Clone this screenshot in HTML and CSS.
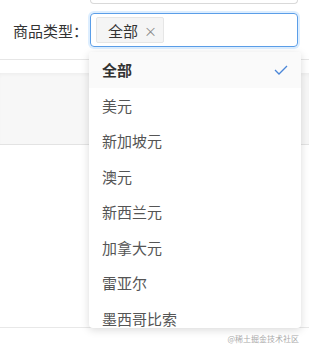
FILE: index.html
```html
<!DOCTYPE html>
<html lang="zh">
<head>
  <meta charset="UTF-8" />
  <title>商品类型</title>
  <link rel="stylesheet" href="styles.css">
</head>
<body>
  <div class="top-input"></div>

  <div class="form-row">
    <label class="form-label">商品类型：</label>
    <div class="select">
      <span class="tag">全部 <span class="tag-close">×</span></span>
    </div>
  </div>

  <div class="divider"></div>

  <div class="table">
    <div class="table-head"></div>
    <div class="table-body"></div>
  </div>

  <ul class="dropdown">
    <li class="option selected">全部 <span class="check">
      <svg width="14" height="10" viewBox="0 0 14 10"><path d="M1 5 L5 9 L13 1" fill="none" stroke="#4a86d8" stroke-width="1.3"/></svg>
    </span></li>
    <li class="option">美元</li>
    <li class="option">新加坡元</li>
    <li class="option">澳元</li>
    <li class="option">新西兰元</li>
    <li class="option">加拿大元</li>
    <li class="option">雷亚尔</li>
    <li class="option">墨西哥比索</li>
  </ul>

  <div class="watermark">@稀土掘金技术社区</div>
</body>
</html>
```

FILE: styles.css
```css
* {
  box-sizing: border-box;
}
body {
  margin: 0;
  background-color: white;
  color: #333;
  font-family: "Noto Sans CJK SC", "Noto Sans", sans-serif;
  position: relative;
  height: 352px;
  overflow: hidden;
}
.top-input {
  margin-left: 90px;
  width: 208px;
  height: 4px;
  border: 1px solid #d9d9d9;
  border-top: none;
  border-radius: 0 0 4px 4px;
}
.form-row {
  display: flex;
  align-items: center;
  margin-top: 9px;
  padding-left: 13px;
}
.form-label {
  width: 77px;
  font-size: 15px;
  color: #333;
}
.select {
  width: 208px;
  height: 34px;
  border: 1px solid #5b9ee8;
  border-radius: 4px;
  box-shadow: 0 0 0 2px rgba(24, 144, 255, 0.15);
  display: flex;
  align-items: center;
  padding-left: 5px;
}
.tag {
  display: flex;
  align-items: center;
  height: 26px;
  padding: 0 6px 0 11px;
  background-color: #f5f5f5;
  border: 1px solid #e6e6e6;
  border-radius: 2px;
  font-size: 15px;
  color: #333;
}
.tag-close {
  margin-left: 6px;
  font-size: 13px;
  color: #888;
}
.divider {
  margin-top: 12px;
  border-top: 1px solid #e6e6e6;
}
.table {
  margin-top: 13px;
}
.table-head {
  height: 72px;
  background-color: #f7f7f7;
  border-bottom: 1px solid #e3e3e3;
  box-shadow: inset 0 3px 4px -2px rgba(0, 0, 0, 0.05);
}
.table-body {
  height: 183px;
  border-bottom: 1px solid #e8e8e8;
}
.dropdown {
  position: absolute;
  left: 89px;
  top: 52px;
  width: 212px;
  margin: 0;
  padding: 0;
  list-style: none;
  background-color: white;
  border-radius: 4px;
  box-shadow: 0 2px 8px rgba(0, 0, 0, 0.15);
  overflow: hidden;
  height: 276px;
}
.option {
  display: flex;
  align-items: center;
  justify-content: space-between;
  height: 35.5px;
  padding: 0 12px 0 13px;
  font-size: 15px;
  color: #555;
}
.option.selected {
  background-color: #fafafa;
  font-weight: bold;
  color: #333;
}
.check {
  display: flex;
  margin-right: 1px;
}
.watermark {
  position: absolute;
  right: 10px;
  top: 333px;
  font-size: 8px;
  color: #aaa;
}
```
